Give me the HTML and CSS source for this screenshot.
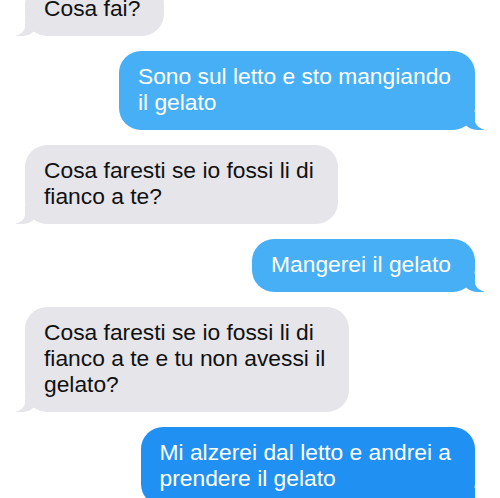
FILE: index.html
```html
<!DOCTYPE html>
<html lang="it">
<head>
<meta charset="utf-8">
<title>Messaggi</title>
<link rel="stylesheet" href="styles.css">
</head>
<body>
<div class="thread">
  <div class="bubble recv">Cosa fai?</div>
  <div class="bubble sent light">Sono sul letto e sto mangiando<br>il gelato</div>
  <div class="bubble recv">Cosa faresti se io fossi li di<br>fianco a te?</div>
  <div class="bubble sent light">Mangerei il gelato</div>
  <div class="bubble recv">Cosa faresti se io fossi li di<br>fianco a te e tu non avessi il<br>gelato?</div>
  <div class="bubble sent dark">Mi alzerei dal letto e andrei a<br>prendere il gelato</div>
</div>
</body>
</html>
```
FILE: styles.css
```css
html, body {
  margin: 0;
  padding: 0;
  background: #ffffff;
  overflow: hidden;
}
body {
  width: 500px;
  height: 498px;
  font-family: "Liberation Sans", Arial, sans-serif;
  font-size: 22.8px;
  line-height: 26px;
}
.thread {
  display: flex;
  flex-direction: column;
  align-items: flex-start;
  gap: 15px;
  padding: 0 25px;
  margin-top: -17px;
}
.bubble {
  position: relative;
  white-space: nowrap;
  padding: 12px 24px 15px 19px;
  border-radius: 22px;
}
.recv {
  background: #e5e5ea;
  color: #111;
}
.sent {
  align-self: flex-end;
  color: #fff;
}
.sent.light { background: #47aff6; }
.sent.dark { background: #2190f3; }

.bubble::before,
.bubble::after {
  content: "";
  position: absolute;
  bottom: 0;
  height: 18px;
}
.recv::before {
  left: -9px;
  width: 22px;
  background: #e5e5ea;
  border-bottom-right-radius: 16px 14px;
}
.recv::after {
  left: -12px;
  width: 12px;
  background: #fff;
  border-bottom-right-radius: 12px 10px;
}
.sent::before {
  right: -9px;
  width: 22px;
  border-bottom-left-radius: 16px 14px;
}
.sent.light::before { background: #47aff6; }
.sent.dark::before { background: #2190f3; }
.sent::after {
  right: -12px;
  width: 12px;
  background: #fff;
  border-bottom-left-radius: 12px 10px;
}
```
